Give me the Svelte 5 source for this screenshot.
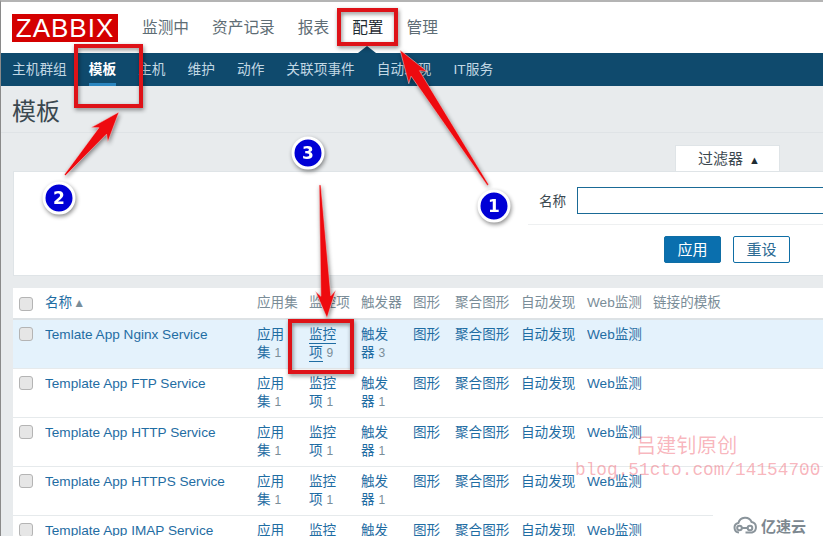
<script>
	const topNav = ['监测中', '资产记录', '报表', '配置', '管理'];
	const subNav = ['主机群组', '模板', '主机', '维护', '动作', '关联项事件', '自动发现', 'IT服务'];
	const columns = ['应用集', '监控项', '触发器', '图形', '聚合图形', '自动发现', 'Web监测', '链接的模板'];
	const rows = [
		{ name: 'Temlate App Nginx Service', apps: 1, items: 9, triggers: 3 },
		{ name: 'Template App FTP Service', apps: 1, items: 1, triggers: 1 },
		{ name: 'Template App HTTP Service', apps: 1, items: 1, triggers: 1 },
		{ name: 'Template App HTTPS Service', apps: 1, items: 1, triggers: 1 },
		{ name: 'Template App IMAP Service', apps: 1, items: 1, triggers: 1 }
	];

	// tail -> tip, thin tail and a barbed head
	function arrow(x1, y1, x2, y2, head, barb) {
		const len = Math.hypot(x2 - x1, y2 - y1);
		const ux = (x2 - x1) / len;
		const uy = (y2 - y1) / len;
		const nx = -uy;
		const ny = ux;
		const at = (back, side) =>
			`${(x2 - ux * back + nx * side).toFixed(1)},${(y2 - uy * back + ny * side).toFixed(1)}`;
		return [
			at(len, 0.8),
			at(head - 5, 5),
			at(head, barb),
			at(0, 0),
			at(head, -barb),
			at(head - 5, -5),
			at(len, -0.8)
		].join(' ');
	}
</script>

<div class="page">
	<header class="top">
		<div class="logo">ZABBIX</div>
		<nav class="top-nav">
			{#each topNav as item}
				<span class="top-item" class:active={item === '配置'}>{item}</span>
			{/each}
		</nav>
	</header>
	<nav class="sub-nav">
		{#each subNav as item}
			<span class="sub-item" class:current={item === '模板'}>{item}</span>
		{/each}
	</nav>

	<main class="content">
		<h1>模板</h1>

		<div class="filter-tab-row">
			<div class="filter-tab">过滤器<span class="tab-caret">▲</span></div>
		</div>
		<section class="filter">
			<div class="filter-form">
				<div class="filter-field">
					<span class="filter-label">名称</span>
					<div class="filter-input"></div>
				</div>
				<div class="filter-actions">
					<span class="btn primary">应用</span>
					<span class="btn">重设</span>
				</div>
			</div>
		</section>

		<table>
			<colgroup>
				<col class="c-check" />
				<col class="c-name" />
				<col class="c-count" />
				<col class="c-count" />
				<col class="c-count" />
				<col class="c-graph" />
				<col class="c-wide" />
				<col class="c-wide" />
				<col class="c-wide" />
				<col />
			</colgroup>
			<thead>
				<tr>
					<th><span class="check"></span></th>
					<th><span class="link">名称</span><span class="sort">▲</span></th>
					{#each columns as col}
						<th>{col}</th>
					{/each}
				</tr>
			</thead>
			<tbody>
				{#each rows as row, i}
					<tr class:hover={i === 0}>
						<td><span class="check"></span></td>
						<td><span class="link">{row.name}</span></td>
						<td><span class="link">应用</span><br /><span class="link">集</span> <small>{row.apps}</small></td>
						<td class:under={i === 0}><span class="link">监控</span><br /><span class="link">项</span> <small>{row.items}</small></td>
						<td><span class="link">触发</span><br /><span class="link">器</span> <small>{row.triggers}</small></td>
						<td><span class="link">图形</span></td>
						<td><span class="link">聚合图形</span></td>
						<td><span class="link">自动发现</span></td>
						<td><span class="link">Web监测</span></td>
						<td></td>
					</tr>
				{/each}
			</tbody>
		</table>
	</main>

	<!-- screenshot annotations drawn on top of the page -->
	<svg class="marks" width="823" height="536" viewBox="0 0 823 536">
		<polygon class="nav-tip" points="358,53 367,46 376,53" />
		<g class="shadow">
			<rect class="box" x="339" y="10" width="57" height="34" />
			<rect class="box" x="76" y="46" width="65" height="60" />
			<rect class="box" x="290" y="321" width="62" height="51" />
			<polygon class="arrow" points={arrow(488, 185, 400, 50, 33, 11)} />
			<polygon class="arrow" points={arrow(65, 175, 119, 112, 30, 11)} />
			<polygon class="arrow" points={arrow(320, 185, 327, 318, 27, 10)} />
		</g>
		<g class="shadow">
			<circle class="badge" cx="494" cy="206" r="15" />
			<text class="digit" x="494" y="212">1</text>
			<circle class="badge" cx="59" cy="198" r="15" />
			<text class="digit" x="59" y="204">2</text>
			<circle class="badge" cx="308" cy="153" r="15" />
			<text class="digit" x="308" y="159">3</text>
		</g>
	</svg>

	<div class="watermark">
		<div class="wm-name">吕建钊原创</div>
		<div class="wm-url">blog.51cto.com/14154700</div>
	</div>

	<div class="yisu">
		<svg width="25" height="18" viewBox="0 0 25 18">
			<path d="M6 16.5a4.8 4.8 0 0 1-.6-9.5A7 7 0 0 1 18.6 6a5.4 5.4 0 0 1 .4 10.5h-6.500" />
			<circle cx="6.500" cy="12" r="2.300" />
			<circle cx="17" cy="12" r="2.300" />
			<path d="M8.800 12h5.900" />
		</svg>
		<span>亿速云</span>
	</div>
</div>

<style>
	:global(body) {
		margin: 0;
		overflow: hidden;
	}
	.page {
		position: relative;
		width: 823px;
		height: 536px;
		box-sizing: border-box;
		overflow: hidden;
		background: #e8ebed;
		border-top: 2px solid #b4b4b4;
		border-left: 1px solid #8a8a8a;
		font-family: "Liberation Sans", "Noto Sans CJK SC", sans-serif;
		font-size: 13.6px;
		color: #1f2c33;
	}

	.top {
		display: flex;
		align-items: center;
		height: 51px;
		padding-left: 11px;
		background: #fff;
	}
	.logo {
		width: 106px;
		height: 28px;
		background: #d40000;
		color: #fff;
		font-size: 26px;
		line-height: 28px;
		text-align: center;
		letter-spacing: 1px;
	}
	.top-nav {
		display: flex;
		margin-left: 12.5px;
	}
	.top-item {
		padding: 0 11.5px;
		font-size: 15.7px;
		line-height: 24px;
		color: #5e6d75;
	}
	.top-item.active {
		color: #1f2c33;
	}

	.sub-nav {
		display: flex;
		height: 33px;
		background: #0f4a6d;
	}
	.sub-item {
		box-sizing: border-box;
		height: 33px;
		margin: 0 11px;
		font-size: 13.7px;
		line-height: 33px;
		color: #c2d8e4;
	}
	.sub-item.current {
		font-weight: 700;
		color: #fff;
		border-bottom: 3px solid #2b86c0;
	}

	.content {
		padding-left: 12px;
	}
	h1 {
		margin: 0 0 0 -12px;
		padding-left: 11px;
		height: 46px;
		border-bottom: 1px solid #dfe3e6;
		font-size: 24px;
		font-weight: 400;
		line-height: 52px;
		color: #3b4850;
	}

	.filter-tab-row {
		display: flex;
		justify-content: flex-end;
		padding: 12px 43px 0 0;
	}
	.filter-tab {
		box-sizing: border-box;
		width: 105px;
		height: 26px;
		padding-left: 3px;
		background: #fff;
		border: 1px solid #dfe4e7;
		border-bottom: 0;
		font-size: 15px;
		line-height: 26px;
		text-align: center;
		color: #3b4850;
	}
	.tab-caret {
		margin-left: 6px;
		font-size: 11px;
		color: #1f2c33;
	}
	.filter {
		box-sizing: border-box;
		display: flex;
		justify-content: flex-end;
		height: 105px;
		background: #fff;
		border: 1px solid #dfe4e7;
		border-right: 0;
	}
	.filter-form {
		width: 295px;
	}
	.filter-field {
		display: flex;
		align-items: center;
		gap: 11px;
		height: 52px;
		padding: 0 0 0 11px;
		border-bottom: 1px solid #eef0f1;
	}
	.filter-label {
		margin-top: 4px;
		color: #3b4850;
		white-space: nowrap;
	}
	.filter-input {
		box-sizing: border-box;
		flex: 1;
		height: 27px;
		margin-top: 4px;
		border: 1px solid #1a6a96;
		border-right: 0;
	}
	.filter-actions {
		display: flex;
		gap: 12px;
		padding: 11px 0 0 136px;
	}
	.btn {
		box-sizing: border-box;
		width: 57px;
		height: 27px;
		border: 1px solid #0f6ea5;
		border-radius: 2px;
		font-size: 15px;
		line-height: 26px;
		text-align: center;
		color: #2b6a92;
		background: #fff;
	}
	.btn.primary {
		background: #0a6fae;
		color: #fff;
	}

	table {
		width: 810px;
		margin-top: 12px;
		background: #fff;
		table-layout: fixed;
		border-collapse: collapse;
	}
	.c-check { width: 32px; }
	.c-name { width: 212px; }
	.c-count { width: 52px; }
	.c-graph { width: 42px; }
	.c-wide { width: 66px; }

	th {
		height: 30px;
		padding: 0;
		border-bottom: 2px solid #dde2e5;
		font-weight: 400;
		text-align: left;
		white-space: nowrap;
		line-height: 28px;
		color: #7a8d98;
	}
	td {
		height: 36px;
		padding: 6px 0;
		border-bottom: 1px solid #e6eaec;
		line-height: 18px;
		vertical-align: top;
		white-space: nowrap;
		overflow: hidden;
	}
	td br + .link {
		display: inline-block;
	}
	tr.hover td {
		background: #e4f2fc;
	}
	.link {
		line-height: 18px;
		color: #1f6da3;
	}
	.under .link {
		display: inline-block;
		line-height: 17px;
		border-bottom: 1px solid #1f6da3;
	}
	small {
		font-size: 12px;
		line-height: 12px;
		color: #7a8d98;
	}
	.sort {
		font-size: 12px;
		line-height: 12px;
		color: #7a8d98;
		margin-left: 1px;
	}
	.check {
		box-sizing: border-box;
		display: block;
		width: 14px;
		height: 14px;
		margin-left: 6px;
		background: #e6e6e6;
		border: 1px solid #b4b4b4;
		border-radius: 3px;
	}
	th .check {
		margin-top: 1px;
	}
	td .check {
		margin-top: 1px;
	}

	.marks {
		position: absolute;
		top: -2px;
		left: -1px;
		pointer-events: none;
	}
	.nav-tip {
		fill: #0f4a6d;
	}
	.shadow {
		filter: drop-shadow(1px 2px 2px rgba(0, 0, 0, 0.45));
	}
	.box {
		fill: none;
		stroke: #de1218;
		stroke-width: 4;
	}
	.arrow {
		fill: #ee0a0f;
		stroke: #f6d6d6;
		stroke-width: 0.5;
	}
	.badge {
		fill: #0000d6;
		stroke: #fff;
		stroke-width: 3;
	}
	.digit {
		fill: #fff;
		font-family: "DejaVu Sans", sans-serif;
		font-size: 17px;
		font-weight: 700;
		text-anchor: middle;
	}

	.watermark {
		position: absolute;
		top: 431px;
		left: 574px;
		color: rgba(238, 80, 95, 0.42);
		white-space: nowrap;
		pointer-events: none;
	}
	.wm-name {
		margin-left: 61px;
		font-size: 20px;
		line-height: 27px;
		letter-spacing: 0.3px;
	}
	.wm-url {
		font-family: "Liberation Mono", monospace;
		font-size: 17.8px;
		line-height: 20px;
	}

	.yisu {
		position: absolute;
		top: 510px;
		left: 712px;
		display: flex;
		align-items: center;
		gap: 3px;
		width: 111px;
		height: 26px;
		padding-left: 20px;
		box-sizing: border-box;
		background: #fff;
		color: #7d8890;
		font-size: 15px;
		font-weight: 700;
	}
	.yisu svg {
		fill: none;
		stroke: #8a949b;
		stroke-width: 2;
	}
</style>
